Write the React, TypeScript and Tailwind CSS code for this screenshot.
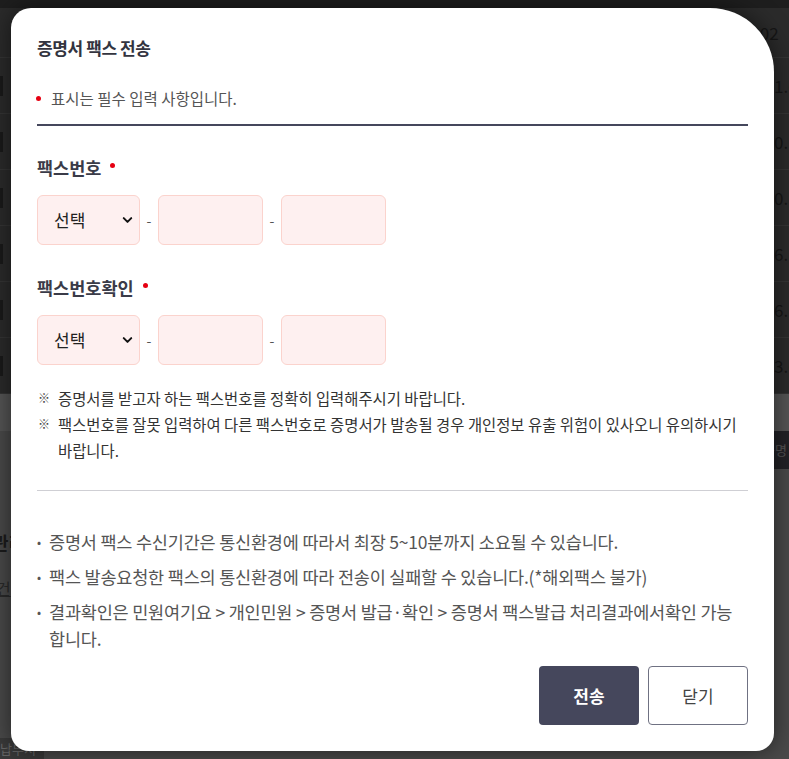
import { ChevronDown } from 'lucide-react';

const font = { fontFamily: '"Noto Sans CJK KR", "Noto Sans", sans-serif' };

function RequiredDot({ className = '' }: { className?: string }) {
  return <span className={`inline-block w-[5px] h-[5px] rounded-full bg-[#e60012] ${className}`} />;
}

function PhoneRow() {
  return (
    <div className="flex items-center gap-[6px] mt-[15px]">
      <div className="relative w-[103px] h-[50px]">
        <select className="appearance-none w-full h-full rounded-[6px] border border-[#fbd3cd] bg-[#fef0f0] pl-4 text-[17px] text-[#222] outline-none">
          <option>선택</option>
        </select>
        <ChevronDown
          size={15}
          strokeWidth={3.2}
          className="absolute right-[5px] top-1/2 -translate-y-1/2 text-[#111] pointer-events-none"
        />
      </div>
      <span className="w-[6px] text-center text-[14px] text-[#555]">-</span>
      <input className="w-[105px] h-[50px] rounded-[6px] border border-[#fbd3cd] bg-[#fef0f0] outline-none" />
      <span className="w-[6px] text-center text-[14px] text-[#555]">-</span>
      <input className="w-[105px] h-[50px] rounded-[6px] border border-[#fbd3cd] bg-[#fef0f0] outline-none" />
    </div>
  );
}

const rowTexts = ['1.6', '0.', '0.', '6.', '6.', '3.6'];

export default function App() {
  return (
    <div className="relative w-[789px] h-[759px] overflow-hidden bg-[#4a4a4a]" style={font}>
      {/* dimmed page behind the dialog */}
      <div className="h-[8px] bg-[#1e1e1e]" />
      <div className="bg-[#2b2b2b]">
        <div className="h-[50px] border-b border-[#353535] flex items-center whitespace-nowrap pl-[741px] text-[17px] text-[#161616]">
          2002
        </div>
        {rowTexts.map((t, i) => (
          <div
            key={i}
            className="relative h-[56px] border-b border-[#353535] flex items-center whitespace-nowrap pl-[774px] text-[17px] text-[#161616]"
          >
            <span className="absolute left-0 top-[18px] w-[3px] h-[20px] bg-[#1a1a1a]" />
            {t}
          </div>
        ))}
      </div>
      <div className="h-[37px] bg-[#555]" />
      <div className="h-[38px] flex">
        <div className="flex-1" />
        <div className="w-[40px] bg-[#222226] flex items-center pl-[14px] text-[13px] text-[#555] whitespace-nowrap">
          증명
        </div>
      </div>
      <div className="pt-[60px] text-[18px] font-bold text-[#1c1c1c] whitespace-nowrap -ml-[8px]">관리</div>
      <div className="mt-[20px] text-[16px] text-[#2a2a2a] underline whitespace-nowrap -ml-[4px]">건</div>
      <div className="mt-[138px] w-[44px] h-[21px] bg-[#3a3a3a] text-[13px] leading-[21px] text-[#666] whitespace-nowrap">
        납부서
      </div>

      {/* dialog */}
      <div className="absolute left-[11px] top-[8px] w-[763px] h-[743px] bg-white rounded-tl-[20px] rounded-tr-[64px] rounded-b-[18px] shadow-[0_0_24px_rgba(0,0,0,0.55)] px-[26px] pt-[28px] pb-[26px] flex flex-col">
        <h2 className="text-[17px] leading-[24px] font-bold text-[#33343f] tracking-[-0.4px]">증명서 팩스 전송</h2>

        <div className="mt-[28px] pb-[16px] border-b-2 border-[#45475c] flex items-center text-[15.5px] leading-[20px] text-[#555]">
          <RequiredDot className="ml-[-1px] mr-[10px]" />
          표시는 필수 입력 사항입니다.
        </div>

        <div className="mt-[30px] flex items-center text-[17.5px] leading-[24px] font-bold text-[#3a3b48]">
          팩스번호
          <RequiredDot className="ml-[9px] -mt-[6px]" />
        </div>
        <PhoneRow />

        <div className="mt-[31px] flex items-center text-[17.5px] leading-[24px] font-bold text-[#3a3b48]">
          팩스번호확인
          <RequiredDot className="ml-[9px] -mt-[6px]" />
        </div>
        <PhoneRow />

        <ul className="mt-[20px] text-[15.4px] leading-[26px] text-[#333] break-keep">
          <li className="flex">
            <span className="w-[21px] pl-[1px] shrink-0 text-[12px] font-bold text-[#444]">※</span>
            <span>증명서를 받고자 하는 팩스번호를 정확히 입력해주시기 바랍니다.</span>
          </li>
          <li className="flex">
            <span className="w-[21px] pl-[1px] shrink-0 text-[12px] font-bold text-[#444]">※</span>
            <span>
              팩스번호를 잘못 입력하여 다른 팩스번호로 증명서가 발송될 경우 개인정보 유출 위험이 있사오니 유의하시기
              바랍니다.
            </span>
          </li>
        </ul>

        <div className="mt-[27px] h-px bg-[#cfcfd4]" />

        <ul className="mt-[37px] text-[17.5px] leading-[27px] text-[#555] tracking-[-0.2px] space-y-[8px] break-keep">
          <li className="flex">
            <span className="w-[12px] shrink-0 text-[12px]">•</span>
            <span>증명서 팩스 수신기간은 통신환경에 따라서 최장 5~10분까지 소요될 수 있습니다.</span>
          </li>
          <li className="flex">
            <span className="w-[12px] shrink-0 text-[12px]">•</span>
            <span>팩스 발송요청한 팩스의 통신환경에 따라 전송이 실패할 수 있습니다.(*해외팩스 불가)</span>
          </li>
          <li className="flex">
            <span className="w-[12px] shrink-0 text-[12px]">•</span>
            <span>
              결과확인은 민원여기요 &gt; 개인민원 &gt; 증명서 발급·확인 &gt; 증명서 팩스발급 처리결과에서확인 가능
              합니다.
            </span>
          </li>
        </ul>

        <div className="mt-auto flex justify-end gap-[9px]">
          <button className="w-[100px] h-[59px] rounded-[4px] bg-[#45475c] text-white text-[17px] font-bold">
            전송
          </button>
          <button className="w-[100px] h-[59px] rounded-[4px] border border-[#6f7182] bg-white text-[#444] text-[17px]">
            닫기
          </button>
        </div>
      </div>
    </div>
  );
}
